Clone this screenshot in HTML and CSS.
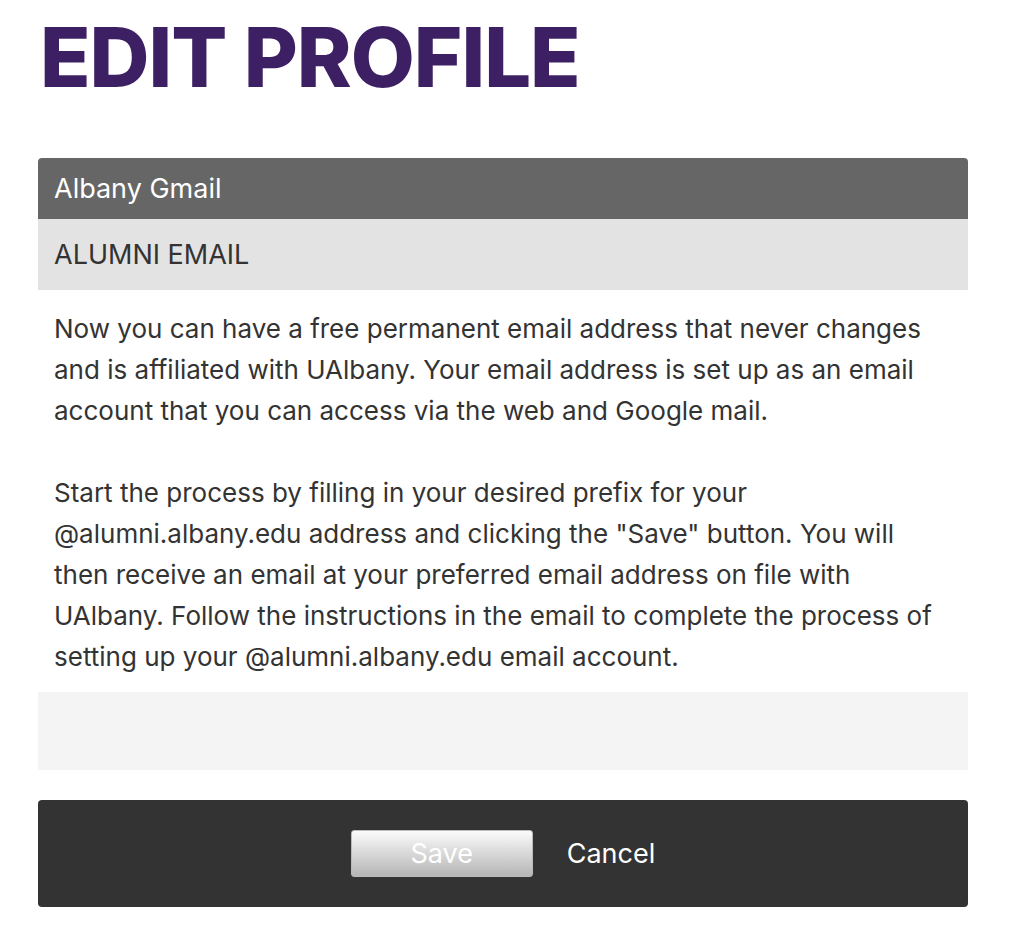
FILE: index.html
```html
<!DOCTYPE html>
<html>
<head>
<meta charset="utf-8">
<link rel="stylesheet" href="styles.css">
</head>
<body>
<div class="page">
  <h1 class="title">EDIT PROFILE</h1>
  <div class="panel">
    <div class="panel-head">Albany Gmail</div>
    <div class="panel-sub">ALUMNI EMAIL</div>
    <div class="panel-body">
      <p>Now you can have a free permanent email address that never changes and is affiliated with UAlbany. Your email address is set up as an email account that you can access via the web and Google mail.</p>
      <p>Start the process by filling in your desired prefix for your @alumni.albany.edu address and clicking the "Save" button. You will then receive an email at your preferred email address on file with UAlbany. Follow the instructions in the email to complete the process of setting up your @alumni.albany.edu email account.</p>
    </div>
    <div class="panel-foot"></div>
  </div>
  <div class="actions">
    <button class="btn-save" type="button">Save</button>
    <a class="btn-cancel" href="#">Cancel</a>
  </div>
</div>
</body>
</html>
```
FILE: styles.css
```css
html, body {
  margin: 0;
  padding: 0;
  background: #fff;
}
body {
  font-family: Inter, "Liberation Sans", sans-serif;
  color: #333;
}
.page {
  width: 930px;
  margin-left: 38px;
  padding-top: 12px;
}
.title {
  margin: 0 0 0 2px;
  font-size: 83px;
  line-height: 90px;
  font-weight: 800;
  color: #3d1f63;
  letter-spacing: -1px;
}
.panel {
  margin-top: 56px;
}
.panel-head {
  background: #666;
  color: #fff;
  height: 61px;
  line-height: 61px;
  padding-left: 16px;
  font-size: 27px;
  border-radius: 4px 4px 0 0;
}
.panel-sub {
  background: #e3e3e3;
  height: 71px;
  line-height: 71px;
  padding-left: 16px;
  font-size: 27px;
  color: #333;
}
.panel-body {
  padding: 18px 16px 15px 16px;
  font-size: 26px;
  line-height: 41px;
  color: #333;
}
.panel-body p {
  margin: 0 0 41px 0;
}
.panel-body p:last-child {
  margin-bottom: 0;
}
.panel-foot {
  background: #f4f4f4;
  height: 78px;
}
.actions {
  margin-top: 30px;
  background: #333;
  height: 107px;
  border-radius: 4px;
  display: flex;
  align-items: center;
  justify-content: center;
  gap: 34px;
}
.btn-save {
  width: 182px;
  height: 47px;
  border: 1px solid #bbb;
  border-radius: 3px;
  background: linear-gradient(#fbfbfb, #b5b5b5);
  color: #fff;
  font-family: Inter, "Liberation Sans", sans-serif;
  font-size: 27px;
  padding: 0;
}
.btn-cancel {
  color: #fff;
  text-decoration: none;
  font-size: 27px;
}
```
